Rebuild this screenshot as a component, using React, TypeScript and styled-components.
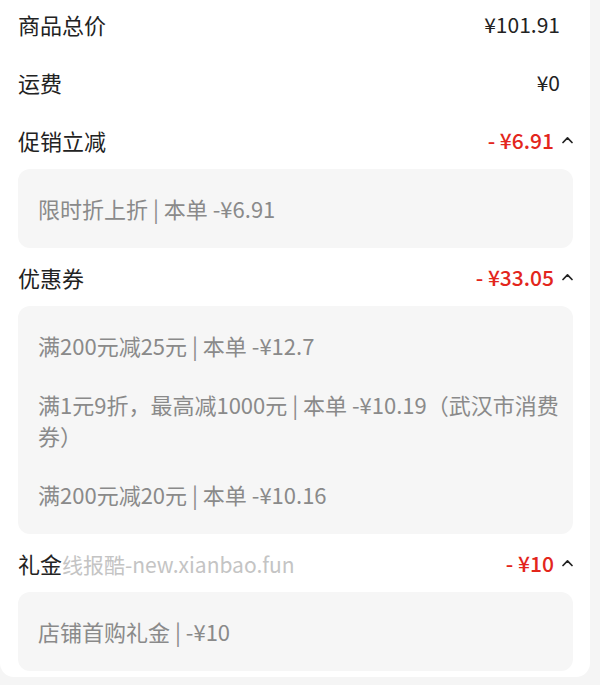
import React from 'react';
import styled, { createGlobalStyle } from 'styled-components';

const GlobalStyle = createGlobalStyle`
  html, body {
    margin: 0;
    padding: 0;
    background: #f5f5f5;
  }
  body {
    font-family: "Noto Sans CJK SC", "Noto Sans", sans-serif;
  }
`;

const colors = {
  title: '#222222',
  detail: '#8a8a8a',
  red: '#e3261c',
  box: '#f6f6f6',
  watermark: '#c4c4c4',
};

const Card = styled.div`
  width: 590px;
  margin-top: -5px;
  padding: 0 17px 6px 18px;
  box-sizing: border-box;
  background: #ffffff;
  border-radius: 0 0 14px 14px;
`;

const Row = styled.div`
  height: 58px;
  display: flex;
  align-items: center;
  justify-content: space-between;
`;

const Title = styled.div`
  font-size: 22px;
  color: ${colors.title};
  display: flex;
  align-items: baseline;
`;

const Watermark = styled.span`
  color: ${colors.watermark};
  font-size: 21px;
`;

const Value = styled.div<{ $red?: boolean; $inset?: boolean }>`
  display: flex;
  align-items: center;
  gap: 8px;
  font-size: 21px;
  font-weight: ${(p) => (p.$red ? 500 : 400)};
  color: ${(p) => (p.$red ? colors.red : colors.title)};
  padding-right: ${(p) => (p.$inset ? '13px' : '0')};
  white-space: pre;
`;

const Chevron = styled.svg`
  width: 11px;
  height: 8px;
  display: block;
`;

const DetailBox = styled.div`
  background: ${colors.box};
  border-radius: 12px;
  padding: 24px 12px 24px 20px;
  display: flex;
  flex-direction: column;
  gap: 28px;
`;

const DetailLine = styled.div`
  font-size: 22px;
  line-height: 31px;
  color: ${colors.detail};
`;

const Up = () => (
  <Chevron viewBox="0 0 11 8">
    <polyline
      points="1,6.5 5.5,1.8 10,6.5"
      fill="none"
      stroke="#222"
      strokeWidth="1.7"
      strokeLinecap="round"
      strokeLinejoin="round"
    />
  </Chevron>
);

type Section = {
  title: string;
  watermark?: string;
  amount: string;
  details: string[];
};

const sections: Section[] = [
  { title: '促销立减', amount: '- ¥6.91', details: ['限时折上折 | 本单 -¥6.91'] },
  {
    title: '优惠券',
    amount: '- ¥33.05',
    details: [
      '满200元减25元 | 本单 -¥12.7',
      '满1元9折，最高减1000元 | 本单 -¥10.19（武汉市消费券）',
      '满200元减20元 | 本单 -¥10.16',
    ],
  },
  {
    title: '礼金',
    watermark: '线报酷-new.xianbao.fun',
    amount: '- ¥10',
    details: ['店铺首购礼金 | -¥10'],
  },
];

export default function App() {
  return (
    <>
      <GlobalStyle />
      <Card>
        <Row>
          <Title>商品总价</Title>
          <Value $inset>¥101.91</Value>
        </Row>
        <Row>
          <Title>运费</Title>
          <Value $inset>¥0</Value>
        </Row>
        {sections.map((s) => (
          <React.Fragment key={s.title}>
            <Row>
              <Title>
                {s.title}
                {s.watermark && <Watermark>{s.watermark}</Watermark>}
              </Title>
              <Value $red>
                {s.amount}
                <Up />
              </Value>
            </Row>
            <DetailBox>
              {s.details.map((d) => (
                <DetailLine key={d}>{d}</DetailLine>
              ))}
            </DetailBox>
          </React.Fragment>
        ))}
      </Card>
    </>
  );
}
